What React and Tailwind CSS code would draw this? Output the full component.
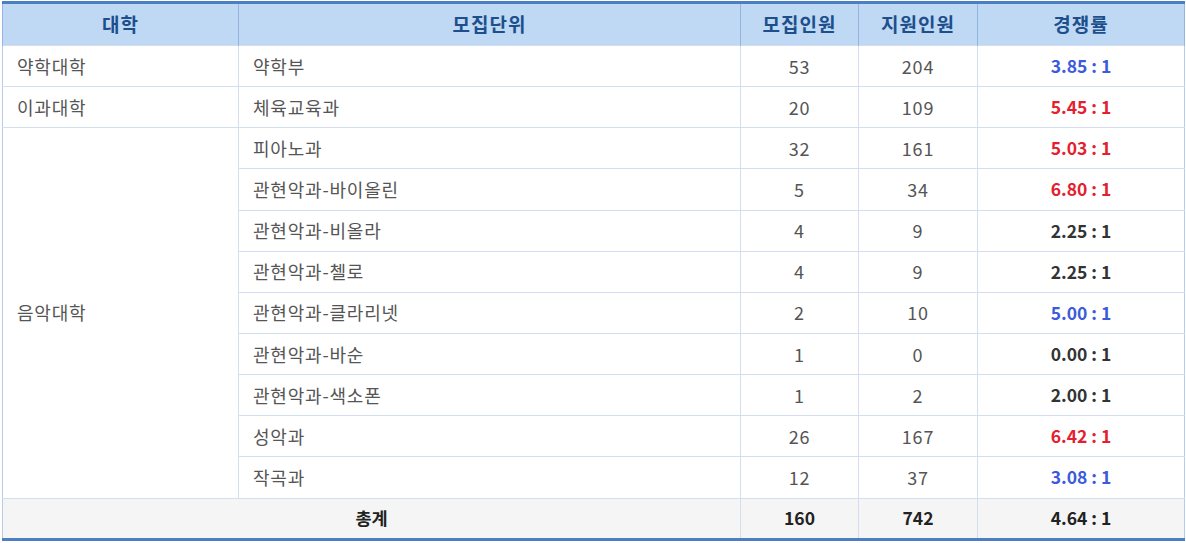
import React from 'react';

const rows = [
  { college: '약학대학', span: 1, unit: '약학부', quota: 53, applied: 204, ratio: '3.85 : 1', tone: 'blue' },
  { college: '이과대학', span: 1, unit: '체육교육과', quota: 20, applied: 109, ratio: '5.45 : 1', tone: 'red' },
  { college: '음악대학', span: 9, unit: '피아노과', quota: 32, applied: 161, ratio: '5.03 : 1', tone: 'red' },
  { unit: '관현악과-바이올린', quota: 5, applied: 34, ratio: '6.80 : 1', tone: 'red' },
  { unit: '관현악과-비올라', quota: 4, applied: 9, ratio: '2.25 : 1', tone: 'dark' },
  { unit: '관현악과-첼로', quota: 4, applied: 9, ratio: '2.25 : 1', tone: 'dark' },
  { unit: '관현악과-클라리넷', quota: 2, applied: 10, ratio: '5.00 : 1', tone: 'blue' },
  { unit: '관현악과-바순', quota: 1, applied: 0, ratio: '0.00 : 1', tone: 'dark' },
  { unit: '관현악과-색소폰', quota: 1, applied: 2, ratio: '2.00 : 1', tone: 'dark' },
  { unit: '성악과', quota: 26, applied: 167, ratio: '6.42 : 1', tone: 'red' },
  { unit: '작곡과', quota: 12, applied: 37, ratio: '3.08 : 1', tone: 'blue' },
];

const toneClass = {
  blue: 'text-[#3b5bdb]',
  red: 'text-[#e5202e]',
  dark: 'text-[#333333]',
};

const th = 'h-[43px] border-x border-[#93b5df] text-[19px] tracking-[1px] font-bold text-[#1c4f8c] text-center';
const cell = 'h-[41.15px] border border-[#d3def0]';
const td = `${cell} text-[18px] tracking-[0.8px] text-[#555555]`;
const tdBold = `${cell} text-[17.5px] text-center font-bold`;

export default function App() {
  return (
    <div className="bg-white pt-px pl-[2px] w-[1186px] h-[543px] font-['Malgun_Gothic','Noto_Sans_CJK_KR',sans-serif]">
      <table className="w-[1182px] table-fixed border-collapse border-t-[3px] border-b-[3px] border-t-[#4a7fc1] border-b-[#4a7fc1]">
        <colgroup>
          <col className="w-[236px]" />
          <col className="w-[502px]" />
          <col className="w-[118px]" />
          <col className="w-[119px]" />
          <col className="w-[207px]" />
        </colgroup>
        <thead>
          <tr className="bg-[#bfd8f4]">
            <th className={th}>대학</th>
            <th className={th}>모집단위</th>
            <th className={th}>모집인원</th>
            <th className={th}>지원인원</th>
            <th className={th}>경쟁률</th>
          </tr>
        </thead>
        <tbody>
          {rows.map((r, i) => (
            <tr key={i}>
              {r.college && (
                <td rowSpan={r.span} className={`${td} pl-[14px] border-l-[#b7cbec]`}>{r.college}</td>
              )}
              <td className={`${td} pl-[14px]`}>{r.unit}</td>
              <td className={`${td} text-center`}>{r.quota}</td>
              <td className={`${td} text-center`}>{r.applied}</td>
              <td className={`${tdBold} border-r-[#b7cbec] ${toneClass[r.tone]}`}>{r.ratio}</td>
            </tr>
          ))}
          <tr className="bg-[#f5f5f5]">
            <td colSpan={2} className={`${tdBold} text-[#222222] border-l-[#b7cbec]`}>총계</td>
            <td className={`${tdBold} text-[#222222]`}>160</td>
            <td className={`${tdBold} text-[#222222]`}>742</td>
            <td className={`${tdBold} text-[#222222] border-r-[#b7cbec]`}>4.64 : 1</td>
          </tr>
        </tbody>
      </table>
    </div>
  );
}
